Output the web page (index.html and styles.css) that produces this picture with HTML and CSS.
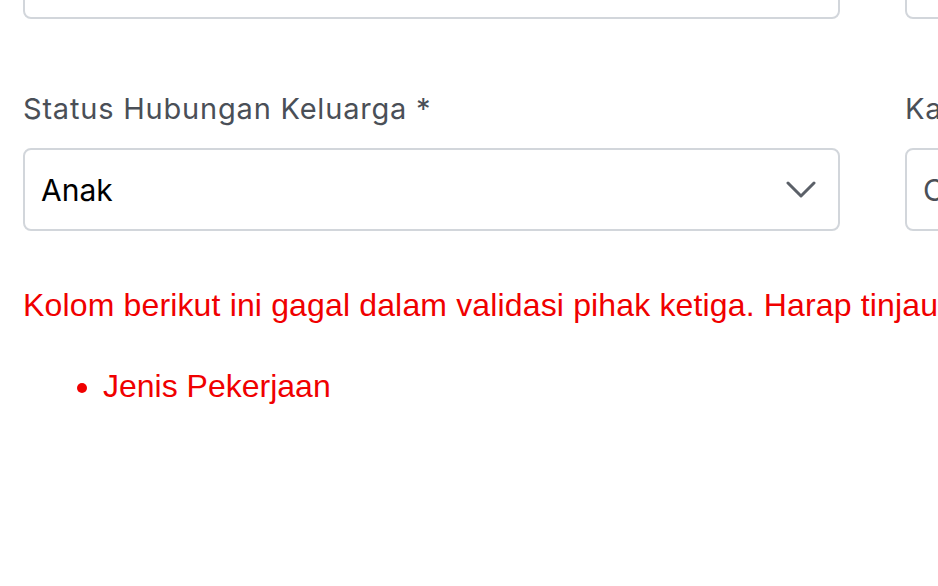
FILE: index.html
```html
<!DOCTYPE html>
<html>
<head>
    <meta charset="utf-8">
    <meta name="viewport" content="width=device-width, initial-scale=1">
    <link rel="stylesheet" href="styles.css">
    <title>Data Keluarga</title>
</head>
<body>
<div class="form">
    <div class="row top">
        <div class="field"><div class="control"></div></div>
        <div class="field"><div class="control"></div></div>
    </div>
    <div class="row">
        <div class="field">
            <label class="label">Status Hubungan Keluarga *</label>
            <div class="control select">
                <span class="value">Anak</span>
                <svg class="chevron" width="30" height="18" viewBox="0 0 30 18">
                    <path d="M2 2 L15 15 L28 2" fill="none" stroke="#5b6068" stroke-width="3" stroke-linecap="round" stroke-linejoin="round"/>
                </svg>
            </div>
        </div>
        <div class="field">
            <label class="label">Kartu Keluarga *</label>
            <div class="control"><span class="value muted">C</span></div>
        </div>
    </div>
</div>
<p class="error">Kolom berikut ini gagal dalam validasi pihak ketiga. Harap tinjau kembali isian berikut.</p>
<ul class="error-list">
    <li>Jenis Pekerjaan</li>
</ul>
</body>
</html>
```

FILE: styles.css
```css
body{
    margin: 0;
    padding-left: 23px;
    overflow: hidden;
    background: #fff;
    font-family: Inter, "Liberation Sans", sans-serif;
}

.form{
    width: 1700px;
}

.row{
    display: grid;
    grid-template-columns: 817px 817px;
    column-gap: 65px;
    margin-bottom: 56px;
}

.row.top{
    margin-top: -64px;
    margin-bottom: 72px;
}

.label{
    display: block;
    font-size: 29px;
    line-height: 36px;
    letter-spacing: 0.8px;
    color: #4a4f57;
    margin-bottom: 21px;
    white-space: nowrap;
}

.control{
    box-sizing: border-box;
    height: 83px;
    border: 2px solid #d2d6db;
    border-radius: 8px;
    display: flex;
    align-items: center;
    padding: 0 22px 0 16px;
}

.value{
    font-size: 30px;
    color: #000;
    flex: 1;
}

.muted{
    color: #4a4f57;
}

.error{
    margin: 0;
    font-family: "Liberation Sans", sans-serif;
    font-size: 32px;
    line-height: 36px;
    letter-spacing: 0.15px;
    color: #f00000;
    white-space: nowrap;
}

.error-list{
    margin: 45px 0 0;
    padding-left: 80px;
    font-family: "Liberation Sans", sans-serif;
    font-size: 32px;
    line-height: 36px;
    color: #f00000;
}
```
